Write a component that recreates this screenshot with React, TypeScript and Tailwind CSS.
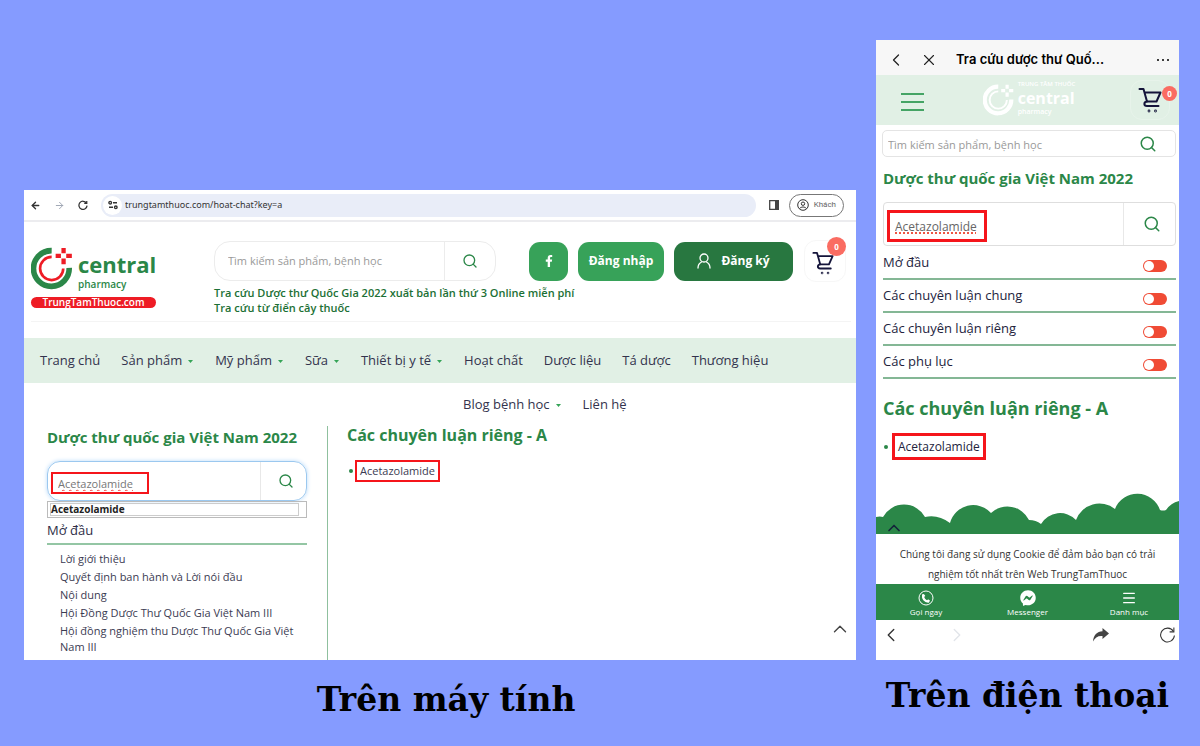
import type { ReactNode } from "react";
import { ArrowLeft, ArrowRight, ChevronLeft, ChevronRight, ChevronUp, Menu, Search, X } from "lucide-react";
import { FaFacebookF, FaFacebookMessenger } from "react-icons/fa";

const navItems = [
  { label: "Trang chủ" },
  { label: "Sản phẩm", menu: true },
  { label: "Mỹ phẩm", menu: true },
  { label: "Sữa", menu: true },
  { label: "Thiết bị y tế", menu: true },
  { label: "Hoạt chất" },
  { label: "Dược liệu" },
  { label: "Tá dược" },
  { label: "Thương hiệu" },
];

const navItemsMore = [{ label: "Blog bệnh học", menu: true }, { label: "Liên hệ" }];

const chapters = [
  "Lời giới thiệu",
  "Quyết định ban hành và Lời nói đầu",
  "Nội dung",
  "Hội Đồng Dược Thư Quốc Gia Việt Nam III",
  "Hội đồng nghiệm thu Dược Thư Quốc Gia Việt Nam III",
];

const sections = ["Mở đầu", "Các chuyên luận chung", "Các chuyên luận riêng", "Các phụ lục"];

function LogoMark({ className, ring, inner }: { className: string; ring: string; inner: string }) {
  return (
    <svg viewBox="0 0 126 130" className={className} fill="none" aria-hidden="true">
      <path d="M62 11A54 54 0 1 0 115 63" stroke={ring} strokeWidth="17" />
      <path d="M62 30A35 35 0 1 0 97 65" stroke={inner} strokeWidth="8" />
      <path d="M98 3v16M98 35v17M74 27h16M106 27h17" stroke={inner} strokeWidth="13" />
    </svg>
  );
}

function CartIcon({ className }: { className: string }) {
  return (
    <svg viewBox="0 0 24 26" className={className} fill="none" stroke="#14143a" strokeWidth="2" strokeLinecap="round" strokeLinejoin="round" aria-hidden="true">
      <path d="M1.500 2H5.500L9 14.500H18.500L22.500 5.500H6.500" />
      <path d="M9 14.500C5.500 15 5.500 19 9 19H20.500" />
      <circle cx="11" cy="24" r="0.400" />
      <circle cx="17.500" cy="24" r="0.400" />
    </svg>
  );
}

function ReloadIcon({ className }: { className: string }) {
  return (
    <svg viewBox="0 0 16 16" className={className} fill="none" stroke="currentColor" aria-hidden="true">
      <path d="M13.500 5A6.500 6.500 0 1 0 14.500 9" />
      <path d="M14 1.500V5.500H10" />
    </svg>
  );
}

function Toggle({ label }: { label: string }) {
  return (
    <label className="flex h-8 items-center justify-between border-b-2 border-[#84b795] pr-[9px] text-[13px] text-[#23233d]">
      {label}
      <input
        type="checkbox"
        className="mt-[6px] h-3 w-6 appearance-none rounded-full bg-[#f04b35] p-px before:block before:size-[10px] before:rounded-full before:bg-white"
      />
    </label>
  );
}

function NavLink({ label, menu }: { label: string; menu?: boolean }) {
  return (
    <a href="#" className="flex items-center gap-1 whitespace-nowrap text-[13px] text-[#33334d]">
      {label}
      {menu && (
        <svg viewBox="0 0 8 8" className="size-2 fill-[#35a457]" aria-hidden="true">
          <path d="M2 3h5L4.500 6z" />
        </svg>
      )}
    </a>
  );
}

function CartButton({ children }: { children: ReactNode }) {
  return (
    <button aria-label="Giỏ hàng" className="relative flex size-10 items-center justify-center rounded-xl border border-white/20">
      {children}
    </button>
  );
}

function BrowserBar() {
  return (
    <div className="flex h-8 items-center border-b-2 border-[#ececef] pr-3 pl-[6px] text-[#333]">
      <button aria-label="Quay lại"><ArrowLeft className="size-[11px]" strokeWidth={3} /></button>
      <button aria-label="Tiếp" className="ml-[13px] text-gray-400"><ArrowRight className="size-[11px]" strokeWidth={2} /></button>
      <button aria-label="Tải lại" className="ml-[13px]"><ReloadIcon className="size-[10px] stroke-2" /></button>
      <div className="ml-[13px] flex h-[23px] flex-1 items-center gap-[3px] rounded-full bg-[#e9edf8] pl-[2px]">
        <span className="flex size-[19px] items-center justify-center rounded-full bg-white">
          <svg viewBox="0 0 10 10" className="size-[10px]" fill="none" stroke="#333" strokeWidth="1.400" aria-hidden="true">
            <circle cx="2.200" cy="2.700" r="1.300" />
            <path d="M5 2.700h4M1 7.300h4" />
            <circle cx="7.800" cy="7.300" r="1.300" />
          </svg>
        </span>
        <input
          aria-label="Địa chỉ"
          defaultValue="trungtamthuoc.com/hoat-chat?key=a"
          className="min-w-0 flex-1 bg-transparent font-['Noto_Sans',sans-serif] text-[9px] text-[#333] outline-none"
        />
      </div>
      <svg viewBox="0 0 10 10" className="ml-[13px] size-[10px]" aria-hidden="true">
        <path d="M.7.7h8.600v8.600H.7z" fill="none" stroke="#444" strokeWidth="1.300" />
        <path d="M6 0h4v10H6z" fill="#444" />
      </svg>
      <button className="ml-[10px] flex h-[23px] items-center gap-[5px] rounded-full border border-[#777] px-[7px] font-['Roboto',sans-serif] text-[8px] text-[#666]">
        <svg viewBox="0 0 12 12" className="size-3" fill="none" stroke="#333" aria-hidden="true">
          <circle cx="6" cy="6" r="5.300" />
          <circle cx="6" cy="4.700" r="1.700" />
          <path d="M2.500 9.500c2-2 5-2 7 0" />
        </svg>
        Khách
      </button>
    </div>
  );
}

function DesktopHeader() {
  return (
    <header className="mr-[5px] ml-[7px] flex h-[100px] items-start border-b border-[#f4f4f4] pt-[19px]">
      <a href="#" className="mt-[6px] w-[125px] shrink-0">
        <span className="flex h-[50px] items-start gap-[5px]">
          <LogoMark className="h-[43px] w-[42px] shrink-0" ring="#2b8748" inner="#ee1c25" />
          <span className="pt-1 text-[#2b8748]">
            <span className="block text-[22px] leading-[26px] font-bold">central</span>
            <span className="block text-[10px] leading-[14px] font-semibold">pharmacy</span>
          </span>
        </span>
        <span className="block rounded-full bg-[#ee1c25] text-center text-[10px] leading-[11px] font-semibold text-white">TrungTamThuoc.com</span>
      </a>
      <div className="ml-[58px] w-[282px] shrink-0">
        <form className="flex h-10 rounded-2xl border border-[#ececec]">
          <input
            aria-label="Tìm kiếm"
            placeholder="Tìm kiếm sản phẩm, bệnh học"
            className="min-w-0 flex-1 pl-[13px] text-[11px] outline-none placeholder:text-[#999]"
          />
          <button type="button" aria-label="Tìm" className="flex w-[51px] items-center justify-center border-l border-[#ececec]">
            <Search className="size-4 text-[#2b8748]" strokeWidth={2} />
          </button>
        </form>
        <p className="mt-1 text-[11px] leading-[15px] font-semibold whitespace-nowrap text-[#1c7035]">
          Tra cứu Dược thư Quốc Gia 2022 xuất bản lần thứ 3 Online miễn phí
          <br />
          Tra cứu từ điển cây thuốc
        </p>
      </div>
      <div className="ml-auto flex h-10 shrink-0 items-center text-[12px] font-bold text-white">
        <a href="#" aria-label="Facebook" className="flex size-[39px] items-center justify-center rounded-[11px] bg-[#37a259]">
          <FaFacebookF className="size-3" />
        </a>
        <button className="ml-[10px] h-[39px] w-[86px] rounded-[11px] bg-[#37a259]">Đăng nhập</button>
        <button className="ml-[10px] flex h-[39px] w-[119px] items-center justify-center gap-[10px] rounded-[11px] bg-[#287740]">
          <svg viewBox="0 0 14 16" className="h-4 w-[14px]" fill="none" stroke="white" strokeWidth="1.300" strokeLinecap="round" aria-hidden="true">
            <circle cx="7" cy="5" r="4" />
            <path d="M1 15c0-3 1.500-5 3.500-6M13 15c0-3-1.500-5-3.500-6" />
          </svg>
          Đăng ký
        </button>
        <div className="relative mr-[5px] ml-[11px] rounded-xl border border-[#f7f7f7]">
          <CartButton><CartIcon className="mt-1 mr-1 h-6 w-[22px]" /></CartButton>
          <span className="absolute -top-[4px] -right-[1px] flex size-[19px] items-center justify-center rounded-full bg-[#fa6c62] text-[8px]">0</span>
        </div>
      </div>
    </header>
  );
}

function DesktopSidebar() {
  return (
    <aside className="w-[304px] shrink-0 border-r border-[#8fc09e] pr-5 pb-[5px] pl-[23px]">
      <h2 className="text-[15px] leading-[22px] font-bold whitespace-nowrap text-[#2b8748]">Dược thư quốc gia Việt Nam 2022</h2>
      <form className="mt-[13px] flex h-10 items-stretch rounded-[13px] border border-[#9bc8ef] pl-[3px] shadow-[0_0_4px_#b8dafa]">
        <div className="flex flex-1 items-center pt-1">
          <input
            aria-label="Tên hoạt chất"
            defaultValue="Acetazolamide"
            className="h-[22px] w-[98px] border-2 border-[#f5151b] pl-[5px] text-[11px] text-[#777] underline decoration-[#ee4444] decoration-wavy decoration-1 outline-none"
          />
        </div>
        <button type="button" aria-label="Tìm" className="flex w-[46px] items-center justify-center border-l border-[#e8e8e8] pl-1">
          <Search className="size-4 text-[#2b8748]" strokeWidth={2} />
        </button>
      </form>
      <div className="h-[17px] border border-[#bbb] py-px pr-[7px] pl-[2px]">
        <div className="h-full border border-[#ccc] text-[10px] leading-[11px] font-bold text-[#222]">Acetazolamide</div>
      </div>
      <h3 className="border-b-2 border-[#94c6a4] text-[13px] leading-[25px] text-[#2d2d47]">Mở đầu</h3>
      <ul className="space-y-[2px] pt-[6px] pl-[13px] text-[11px] leading-4 text-[#3b3b52]">
        {chapters.map((chapter) => (
          <li key={chapter}><a href="#">{chapter}</a></li>
        ))}
      </ul>
    </aside>
  );
}

function Desktop() {
  return (
    <div className="overflow-hidden bg-white">
      <BrowserBar />
      <DesktopHeader />
      <nav className="pt-4">
        <div className="flex h-[45px] items-center gap-[21px] bg-[#e1f0e5] pl-4">
          {navItems.map((item) => <NavLink key={item.label} {...item} />)}
        </div>
        <div className="flex h-[43px] items-center gap-[21px] pl-[439px]">
          {navItemsMore.map((item) => <NavLink key={item.label} {...item} />)}
        </div>
      </nav>
      <div className="flex">
        <DesktopSidebar />
        <main className="flex flex-1 flex-col pr-[5px] pl-[19px]">
          <h2 className="text-[16px] leading-[18px] font-bold text-[#2b8748]">Các chuyên luận riêng - A</h2>
          <div className="mt-4 flex items-center gap-[2px]">
            <span className="ml-[2px] size-1 rounded-full bg-[#2b8748]" />
            <a href="#" className="border-2 border-[#f5151b] px-[3px] text-[11px] leading-[18px] text-[#3b3b52]">Acetazolamide</a>
          </div>
          <button aria-label="Lên đầu trang" className="mt-auto mb-5 self-end"><ChevronUp className="size-[22px] text-[#444]" strokeWidth={1.5} /></button>
        </main>
      </div>
    </div>
  );
}

function Phone() {
  return (
    <div className="overflow-hidden bg-white">
      <div className="flex h-[35px] items-center bg-[#f7f7f7] pt-1 pr-[10px] pl-[10px] text-[#222]">
        <button aria-label="Quay lại"><ChevronLeft className="size-5" strokeWidth={1.5} /></button>
        <button aria-label="Đóng" className="ml-[14px]"><X className="size-[18px]" strokeWidth={1.5} /></button>
        <h1 className="ml-[18px] flex-1 font-['Inter',sans-serif] text-[13px] font-semibold text-black">Tra cứu dược thư Quố...</h1>
        <button aria-label="Thêm" className="flex gap-[3px]">
          <span className="size-[2px] rounded-full bg-black" />
          <span className="size-[2px] rounded-full bg-black" />
          <span className="size-[2px] rounded-full bg-black" />
        </button>
      </div>
      <header className="flex h-[50px] items-center justify-between bg-[#e1f0e5] pr-[9px] pl-[25px]">
        <button aria-label="Menu" className="mt-1 flex w-[23px] flex-col gap-[6px]">
          <span className="h-[2px] bg-[#45a465]" />
          <span className="h-[2px] bg-[#45a465]" />
          <span className="h-[2px] bg-[#45a465]" />
        </button>
        <a href="#" className="ml-1 flex items-center gap-1 text-white">
          <LogoMark className="h-8 w-[31px]" ring="white" inner="white" />
          <span className="-mt-1">
            <span className="block text-[6px] leading-[9px] font-semibold">TRUNG TÂM THUỐC</span>
            <span className="block text-[16px] leading-[18px] font-bold">central</span>
            <span className="block text-[7px] leading-[9px] font-semibold">pharmacy</span>
          </span>
        </a>
        <div className="relative">
          <CartButton><CartIcon className="h-[26px] w-6" /></CartButton>
          <span className="absolute top-[6px] -right-[7px] flex size-[15px] items-center justify-center rounded-full bg-[#fa6c62] text-[8px] font-bold text-white">0</span>
        </div>
      </header>
      <div className="pr-[3px] pl-[6px]">
        <form className="mt-[5px] flex h-[27px] items-center rounded-[5px] border border-[#e4e4e4] pr-[18px] pl-[5px]">
          <input
            aria-label="Tìm kiếm"
            placeholder="Tìm kiếm sản phẩm, bệnh học"
            className="min-w-0 flex-1 pt-[3px] text-[11px] outline-none placeholder:text-[#999]"
          />
          <button type="button" aria-label="Tìm"><Search className="size-[18px] text-[#2b8748]" /></button>
        </form>
        <main className="pl-px">
          <h2 className="mt-[10px] text-[15px] leading-[22px] font-bold whitespace-nowrap text-[#2b8748]">Dược thư quốc gia Việt Nam 2022</h2>
          <form className="mt-[13px] flex h-11 items-stretch rounded border border-[#dedede] pl-[3px]">
            <div className="flex flex-1 items-center pt-1">
              <input
                aria-label="Tên hoạt chất"
                defaultValue="Acetazolamide"
                className="h-8 w-[100px] border-3 border-[#f5151b] pl-[5px] text-[12px] text-[#666] underline decoration-[#ee5544] decoration-dotted decoration-2 underline-offset-2 outline-none"
              />
            </div>
            <button type="button" aria-label="Tìm" className="flex w-[52px] items-center justify-center border-l border-[#e8e8e8] pl-1">
              <Search className="size-[18px] text-[#2b8748]" strokeWidth={2} />
            </button>
          </form>
          <div className="flex flex-col gap-px pt-[2px]">
            {sections.map((section) => <Toggle key={section} label={section} />)}
          </div>
          <h2 className="mt-[17px] text-[18px] leading-6 font-bold text-[#2b8748]">Các chuyên luận riêng - A</h2>
          <div className="mt-[13px] flex items-center gap-1">
            <span className="ml-px size-1 rounded-full bg-[#2b8748]" />
            <a href="#" className="border-3 border-[#f5151b] px-[3px] text-[12px] leading-[21px] text-[#23233d]">Acetazolamide</a>
          </div>
        </main>
      </div>
      <div className="relative mt-[31px]">
        <svg viewBox="0 0 303 43" className="block w-full fill-[#2b8748]" aria-hidden="true">
          <path d="M0 26Q4 25 7 26A24 24 0 0 1 49 26Q62 23 74 32A24 24 0 0 1 115 22A24 24 0 0 1 153 29Q160 29 165 33A22 22 0 0 1 200 29A25 25 0 0 1 239 18A24 24 0 0 1 284 19Q287 20 290 19A22 22 0 0 1 303 10V43H0Z" />
        </svg>
        <button aria-label="Lên đầu trang" className="absolute bottom-0 left-2 h-3"><ChevronUp className="-mt-1 size-5 text-[#14243a]" strokeWidth={2} /></button>
      </div>
      <p className="px-2 pt-[10px] text-center text-[10px] leading-5 text-[#333]">
        Chúng tôi đang sử dụng Cookie để đảm bảo bạn có trải
        <br />
        nghiệm tốt nhất trên Web TrungTamThuoc
      </p>
      <div className="flex h-[36px] items-start justify-between bg-[#2b8748] px-[28px] pt-[6px] text-[8px] leading-3 text-white">
        <a href="#" className="flex w-[44px] flex-col items-center whitespace-nowrap">
          <svg viewBox="0 0 16 16" className="size-4" fill="none" stroke="white" aria-hidden="true">
            <circle cx="8" cy="8" r="7" />
            <path d="M5.500 4.500C4 8 7 12 11 11.500" strokeWidth="2.200" />
            <path d="M5 4.500l1.500 2M9.500 10l2 1.500" strokeWidth="2" />
          </svg>
          Gọi ngay
        </a>
        <a href="#" className="flex w-[44px] flex-col items-center whitespace-nowrap">
          <FaFacebookMessenger className="size-4" />
          Messenger
        </a>
        <a href="#" className="flex w-[44px] flex-col items-center whitespace-nowrap">
          <Menu className="size-4" strokeWidth={2} />
          Danh mục
        </a>
      </div>
      <div className="flex h-10 items-start pt-1 pr-[3px] pl-1 text-[#333]">
        <button aria-label="Trang trước"><ChevronLeft className="size-[22px]" strokeWidth={1.5} /></button>
        <button aria-label="Trang sau" className="ml-11 text-[#e2e5ea]"><ChevronRight className="size-[22px]" strokeWidth={1.5} /></button>
        <button aria-label="Chia sẻ" className="mt-1 ml-auto">
          <svg viewBox="0 0 16 14" className="h-[14px] w-4 fill-[#444]" aria-hidden="true">
            <path d="M9.500 0L16 5.500L9.500 11V8C5 7.500 2 9.500 0 13.500C.5 7 4 3.500 9.500 3.200Z" />
          </svg>
        </button>
        <button aria-label="Tải lại" className="mt-[2px] ml-[50px]"><ReloadIcon className="size-[17px]" /></button>
      </div>
    </div>
  );
}

export default function App() {
  return (
    <div className="grid min-h-screen grid-cols-[832fr_303fr] items-start gap-5 bg-[#859bff] pr-[21px] pl-6 font-['Open_Sans',sans-serif]">
      <figure className="min-w-0 pt-[190px]">
        <Desktop />
        <figcaption className="mt-5 pl-3 text-center font-['DejaVu_Serif',serif] text-[33px] leading-10 font-bold text-black">Trên máy tính</figcaption>
      </figure>
      <figure className="min-w-0 pt-10">
        <Phone />
        <figcaption className="mt-4 text-center font-['DejaVu_Serif',serif] text-[33px] leading-10 font-bold whitespace-nowrap text-black">Trên điện thoại</figcaption>
      </figure>
    </div>
  );
}
